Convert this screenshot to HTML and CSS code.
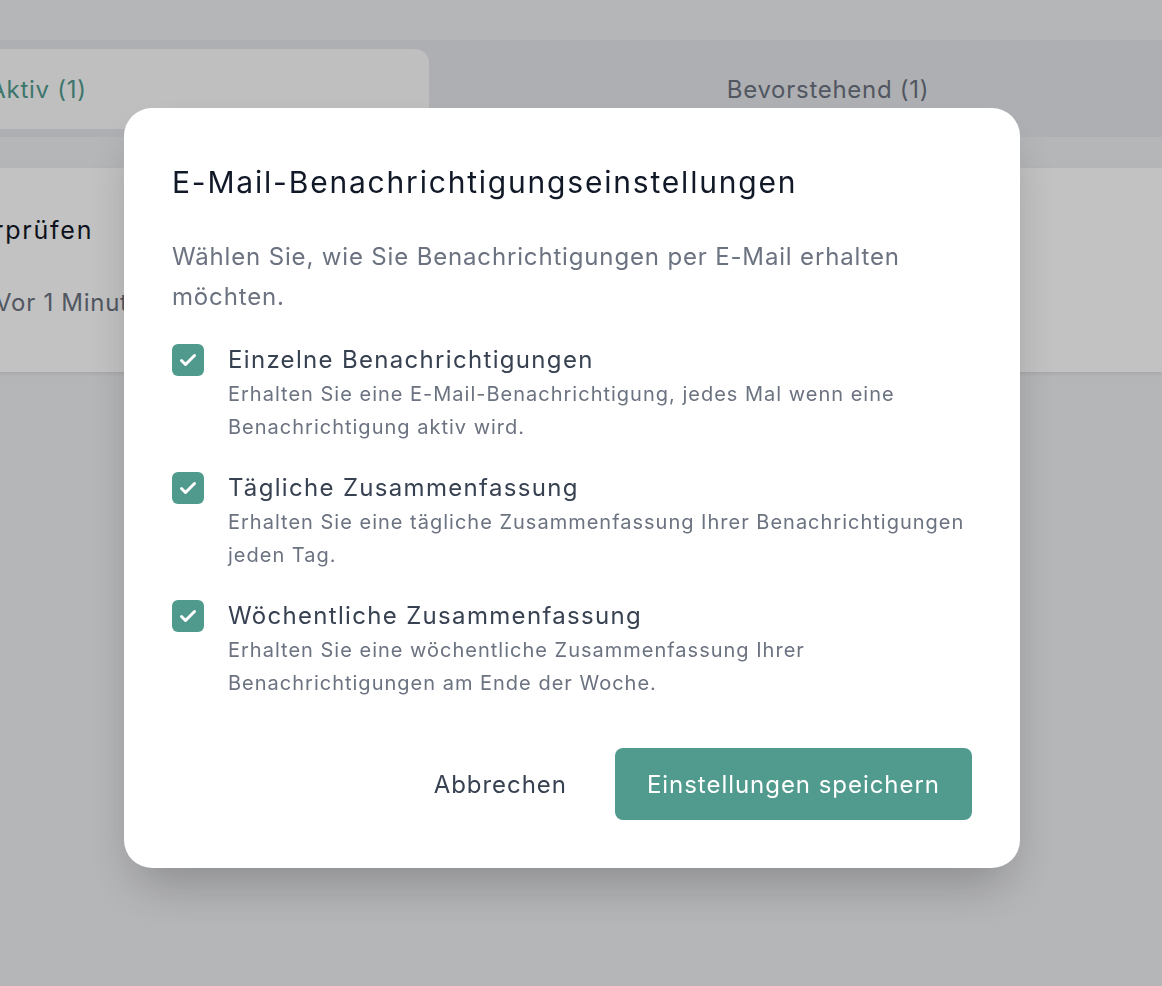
FILE: index.html
```html
<!DOCTYPE html>
<html lang="de">
<head>
    <meta charset="UTF-8">
    <meta name="viewport" content="width=device-width, initial-scale=1.0">
    <title>E-Mail-Benachrichtigungseinstellungen</title>
    <link rel="stylesheet" href="styles.css">
</head>
<body>

<div class="page">
    <header class="topbar"></header>

    <!-- Tabs -->
    <nav class="tabs">
        <div class="tab active">Aktiv (1)</div>
        <div class="tab">Bevorstehend (1)</div>
    </nav>

    <!-- Reminder list -->
    <section class="list">
        <article class="card">
            <h3 class="card-title">Überprüfen</h3>
            <p class="card-time">Vor 1 Minute</p>
        </article>
    </section>
</div>

<!-- Settings dialog -->
<div class="overlay">
    <div class="modal">
        <h2 class="modal-title">E-Mail-Benachrichtigungseinstellungen</h2>
        <p class="modal-text">Wählen Sie, wie Sie Benachrichtigungen per E-Mail erhalten möchten.</p>

        <div class="options">
            <label class="option">
                <span class="checkbox">
                    <svg width="32" height="32" viewBox="0 0 32 32"><path d="M9.5 16.5 L13.5 20.5 L22.5 11.5" fill="none" stroke="#fff" stroke-width="3" stroke-linecap="round" stroke-linejoin="round"/></svg>
                </span>
                <span class="option-body">
                    <span class="option-label">Einzelne Benachrichtigungen</span>
                    <span class="option-desc">Erhalten Sie eine E-Mail-Benachrichtigung, jedes Mal wenn eine Benachrichtigung aktiv wird.</span>
                </span>
            </label>
            <label class="option">
                <span class="checkbox">
                    <svg width="32" height="32" viewBox="0 0 32 32"><path d="M9.5 16.5 L13.5 20.5 L22.5 11.5" fill="none" stroke="#fff" stroke-width="3" stroke-linecap="round" stroke-linejoin="round"/></svg>
                </span>
                <span class="option-body">
                    <span class="option-label">Tägliche Zusammenfassung</span>
                    <span class="option-desc">Erhalten Sie eine tägliche Zusammenfassung Ihrer Benachrichtigungen jeden Tag.</span>
                </span>
            </label>
            <label class="option">
                <span class="checkbox">
                    <svg width="32" height="32" viewBox="0 0 32 32"><path d="M9.5 16.5 L13.5 20.5 L22.5 11.5" fill="none" stroke="#fff" stroke-width="3" stroke-linecap="round" stroke-linejoin="round"/></svg>
                </span>
                <span class="option-body">
                    <span class="option-label">Wöchentliche Zusammenfassung</span>
                    <span class="option-desc">Erhalten Sie eine wöchentliche Zusammenfassung Ihrer Benachrichtigungen am Ende der Woche.</span>
                </span>
            </label>
        </div>

        <div class="actions">
            <button class="btn btn-cancel">Abbrechen</button>
            <button class="btn btn-save">Einstellungen speichern</button>
        </div>
    </div>
</div>

</body>
</html>
```
FILE: styles.css
```css
* {
    box-sizing: border-box;
}

body {
    margin: 0;
    padding: 0;
    height: 100vh;
    overflow: hidden;
    background-color: #eeeff2;
    font-family: Inter, "Noto Sans", sans-serif;
    letter-spacing: 0.045em;
}

.page {
    height: 100%;
}

.topbar {
    height: 41px;
    border-bottom: 1px solid #e6e7eb;
}

.tabs {
    display: grid;
    grid-template-columns: 1fr 1fr;
    gap: 8px;
    width: 1588px;
    margin-left: -361px;
    padding: 8px;
    background-color: #e5e7eb;
}

.tab {
    height: 80px;
    display: flex;
    justify-content: center;
    align-items: center;
    font-size: 24px;
    color: #6b7280;
    border-radius: 14px;
}

.tab.active {
    background-color: #fbfbfb;
    color: #519b8e;
}

.list {
    margin: 31px 0 0 -40px;
}

.card {
    height: 204px;
    padding: 46px 37px 0;
    background-color: #ffffff;
    box-shadow: 0 2px 4px rgba(0, 0, 0, 0.08);
}

.card-title {
    margin: 0 0 0 -57px;
    font-size: 25px;
    line-height: 32px;
    font-weight: 400;
    letter-spacing: 0.07em;
    color: #111827;
}

.card-time {
    margin: 41px 0 0 -2px;
    font-size: 24px;
    line-height: 32px;
    color: #6b7280;
}

.overlay {
    position: fixed;
    inset: 0;
    background-color: rgba(0, 0, 0, 0.24);
    display: flex;
    align-items: flex-start;
    padding: 108px 0 0 124px;
}

.modal {
    width: 896px;
    padding: 56px 48px 48px;
    background-color: #ffffff;
    border-radius: 28px;
    box-shadow: 0 25px 50px -12px rgba(0, 0, 0, 0.25);
}

.modal-title {
    margin: 0;
    font-size: 30px;
    line-height: 36px;
    font-weight: 400;
    letter-spacing: 0.06em;
    color: #111827;
}

.modal-text {
    margin: 37px 0 0;
    font-size: 24px;
    line-height: 40px;
    letter-spacing: 0.035em;
    color: #6b7280;
}

.options {
    display: flex;
    flex-direction: column;
    gap: 26px;
    margin-top: 25px;
}

.option {
    display: flex;
    gap: 24px;
    cursor: pointer;
}

.checkbox {
    flex: none;
    width: 32px;
    height: 32px;
    margin-top: 2px;
    border-radius: 6px;
    background-color: #4f9a8c;
}

.checkbox svg {
    display: block;
}

.option-body {
    display: flex;
    flex-direction: column;
}

.option-label {
    font-size: 24px;
    line-height: 36px;
    letter-spacing: 0.055em;
    color: #374151;
}

.option-desc {
    font-size: 20px;
    line-height: 33px;
    letter-spacing: 0.05em;
    color: #6b7280;
}

.actions {
    display: flex;
    justify-content: flex-end;
    gap: 16px;
    margin-top: 48px;
}

.btn {
    height: 72px;
    padding: 0 32px;
    border: none;
    border-radius: 8px;
    font-family: inherit;
    font-size: 24px;
    letter-spacing: 0.04em;
    cursor: pointer;
}

.btn-cancel {
    background: none;
    color: #374151;
}

.btn-save {
    background-color: #519b8e;
    color: #ffffff;
}
```
